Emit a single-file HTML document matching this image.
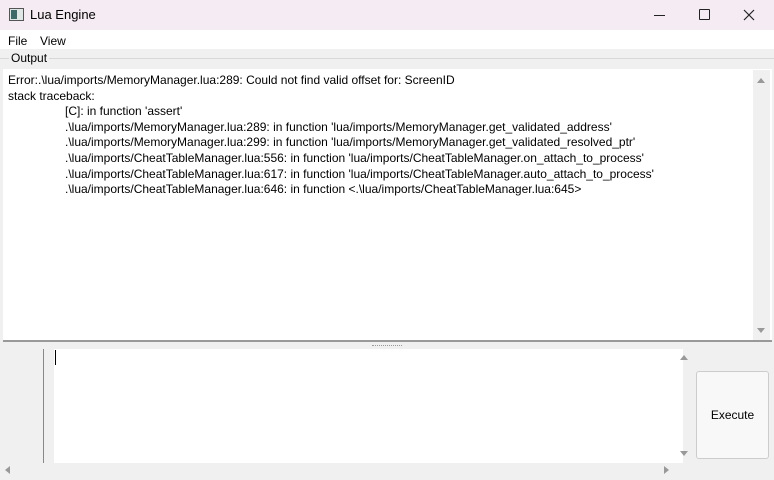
<!DOCTYPE html>
<html><head><style>
*{margin:0;padding:0;box-sizing:border-box}
body{width:774px;height:480px;overflow:hidden;background:#f0f0f0;font-family:"Liberation Sans",sans-serif;font-size:12px;color:#000;position:relative}
.a{position:absolute}
</style></head><body>
<div class="a" style="left:0;top:0;width:774px;height:30px;background:#f4ebf3"></div>
<div class="a" style="left:9px;top:8px;width:15px;height:13px;border:1px solid #555;background:#dfe6e6"></div>
<div class="a" style="left:11px;top:10px;width:6px;height:9px;background:#3d6a68"></div>
<div class="a" style="left:30px;top:7px;font-size:13px">Lua Engine</div>
<div class="a" style="left:654px;top:15px;width:11px;height:1px;background:#222"></div>
<div class="a" style="left:699px;top:9px;width:11px;height:11px;border:1px solid #222;border-radius:1px"></div>
<svg class="a" style="left:743px;top:9px" width="12" height="12"><path d="M1 1L11 11M11 1L1 11" stroke="#222" stroke-width="1.2"/></svg>
<div class="a" style="left:0;top:30px;width:774px;height:19px;background:#fff"></div>
<div class="a" style="left:8px;top:34px">File</div>
<div class="a" style="left:40px;top:34px">View</div>
<div class="a" style="left:0;top:58px;width:774px;height:1px;background:#d8d8d8"></div>
<div class="a" style="left:9px;top:51px;background:#f0f0f0;padding:0 2px">Output</div>
<div class="a" style="left:3px;top:69px;width:769px;height:273px;background:#fff;border-bottom:2px solid #999"></div>
<div class="a" style="left:753px;top:70px;width:17px;height:270px;background:#f0f0f0"></div>
<svg class="a" style="left:756px;top:76px" width="10" height="8"><path d="M1 7L5 2L9 7Z" fill="#999"/></svg>
<svg class="a" style="left:756px;top:327px" width="10" height="8"><path d="M1 1L5 6L9 1Z" fill="#999"/></svg>
<div class="a" style="left:8px;top:73px;line-height:15.6px;white-space:pre">Error:.\lua/imports/MemoryManager.lua:289: Could not find valid offset for: ScreenID
stack traceback:
<span style="padding-left:57px">[C]: in function 'assert'</span>
<span style="padding-left:57px">.\lua/imports/MemoryManager.lua:289: in function 'lua/imports/MemoryManager.get_validated_address'</span>
<span style="padding-left:57px">.\lua/imports/MemoryManager.lua:299: in function 'lua/imports/MemoryManager.get_validated_resolved_ptr'</span>
<span style="padding-left:57px">.\lua/imports/CheatTableManager.lua:556: in function 'lua/imports/CheatTableManager.on_attach_to_process'</span>
<span style="padding-left:57px">.\lua/imports/CheatTableManager.lua:617: in function 'lua/imports/CheatTableManager.auto_attach_to_process'</span>
<span style="padding-left:57px">.\lua/imports/CheatTableManager.lua:646: in function &lt;.\lua/imports/CheatTableManager.lua:645&gt;</span></div>
<div class="a" style="left:372px;top:345px;width:30px;border-top:1px dotted #999"></div>
<div class="a" style="left:43px;top:349px;width:1px;height:114px;background:#888"></div>
<div class="a" style="left:54px;top:349px;width:629px;height:114px;background:#fff"></div>
<div class="a" style="left:55px;top:350px;width:1px;height:15px;background:#000"></div>
<svg class="a" style="left:679px;top:353px" width="10" height="8"><path d="M1 7L5 2L9 7Z" fill="#999"/></svg>
<svg class="a" style="left:679px;top:450px" width="10" height="8"><path d="M1 1L5 6L9 1Z" fill="#999"/></svg>
<div class="a" style="left:696px;top:371px;width:73px;height:88px;border:1px solid #ccc;border-radius:3px;background:#f8f8f8;text-align:center;line-height:86px">Execute</div>
<svg class="a" style="left:3px;top:465px" width="8" height="10"><path d="M7 1L2 5L7 9Z" fill="#999"/></svg>
<svg class="a" style="left:663px;top:465px" width="8" height="10"><path d="M1 1L6 5L1 9Z" fill="#999"/></svg>
</body></html>
